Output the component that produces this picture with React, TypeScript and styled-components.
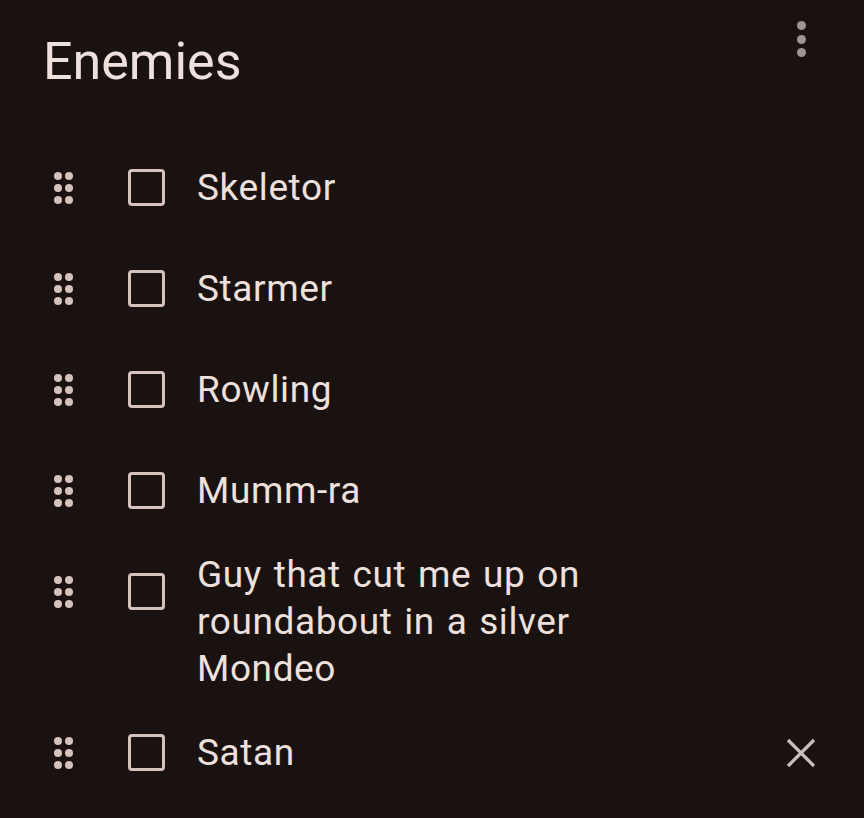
import React from 'react';
import styled, { createGlobalStyle } from 'styled-components';

const GlobalStyle = createGlobalStyle`
  html, body {
    margin: 0;
    padding: 0;
    background: #1a1211;
  }
  body {
    font-family: Roboto, "Noto Sans", sans-serif;
  }
`;

const Screen = styled.div`
  width: 864px;
  height: 818px;
  background: #1a1211;
  color: #eee0dc;
  overflow: hidden;
`;

const Header = styled.div`
  display: flex;
  align-items: flex-start;
  justify-content: space-between;
  padding: 30px 58px 0 43px;
  height: 110px;
  box-sizing: border-box;
`;

const Title = styled.h1`
  margin: 0;
  font-size: 52px;
  font-weight: 400;
  line-height: 64px;
`;

const MenuButton = styled.div`
  display: flex;
  flex-direction: column;
  gap: 4.5px;
  margin-top: -9px;
  span {
    width: 9px;
    height: 9px;
    border-radius: 50%;
    background: #9d9592;
  }
`;

const List = styled.div`
  display: flex;
  flex-direction: column;
  padding-top: 27px;
`;

const Row = styled.div`
  display: flex;
  align-items: flex-start;
  min-height: 101px;
`;

const Controls = styled.div`
  display: flex;
  align-items: center;
  height: 101px;
  padding-left: 54px;
  flex-shrink: 0;
`;

const Handle = styled.div`
  display: grid;
  grid-template-columns: 8px 8px;
  grid-auto-rows: 8px;
  column-gap: 3px;
  row-gap: 4px;
  span {
    border-radius: 50%;
    background: #d6c2bd;
  }
`;

const Box = styled.div`
  width: 31px;
  height: 31px;
  border: 3.5px solid #d6c2bd;
  border-radius: 4px;
  margin-left: 55px;
`;

const Label = styled.div<{ $multi?: boolean }>`
  width: 420px;
  margin-left: 32px;
  font-size: 37px;
  line-height: 47px;
  letter-spacing: 0.6px;
  word-spacing: 2px;
  padding: ${(p) => (p.$multi ? '10px 0' : '27px 0')};
`;

const Remove = styled.div`
  width: 101px;
  height: 101px;
  display: flex;
  align-items: center;
  justify-content: center;
  margin-left: auto;
  margin-right: 13px;
  flex-shrink: 0;
`;

const items = [
  'Skeletor',
  'Starmer',
  'Rowling',
  'Mumm-ra',
  'Guy that cut me up on roundabout in a silver Mondeo',
  'Satan',
];

const App: React.FC = () => {
  return (
    <Screen>
      <GlobalStyle />
      <Header>
        <Title>Enemies</Title>
        <MenuButton>
          <span />
          <span />
          <span />
        </MenuButton>
      </Header>
      <List>
        {items.map((text, i) => (
          <Row key={text}>
            <Controls>
              <Handle>
                {Array.from({ length: 6 }).map((_, j) => (
                  <span key={j} />
                ))}
              </Handle>
              <Box />
            </Controls>
            <Label $multi={text.length > 20}>{text}</Label>
            {i === items.length - 1 && (
              <Remove>
                <svg width="32" height="32" viewBox="0 0 32 32">
                  <path d="M3 3 L29 29 M29 3 L3 29" stroke="#c9c1be" strokeWidth="3.2" />
                </svg>
              </Remove>
            )}
          </Row>
        ))}
      </List>
    </Screen>
  );
};

export default App;
